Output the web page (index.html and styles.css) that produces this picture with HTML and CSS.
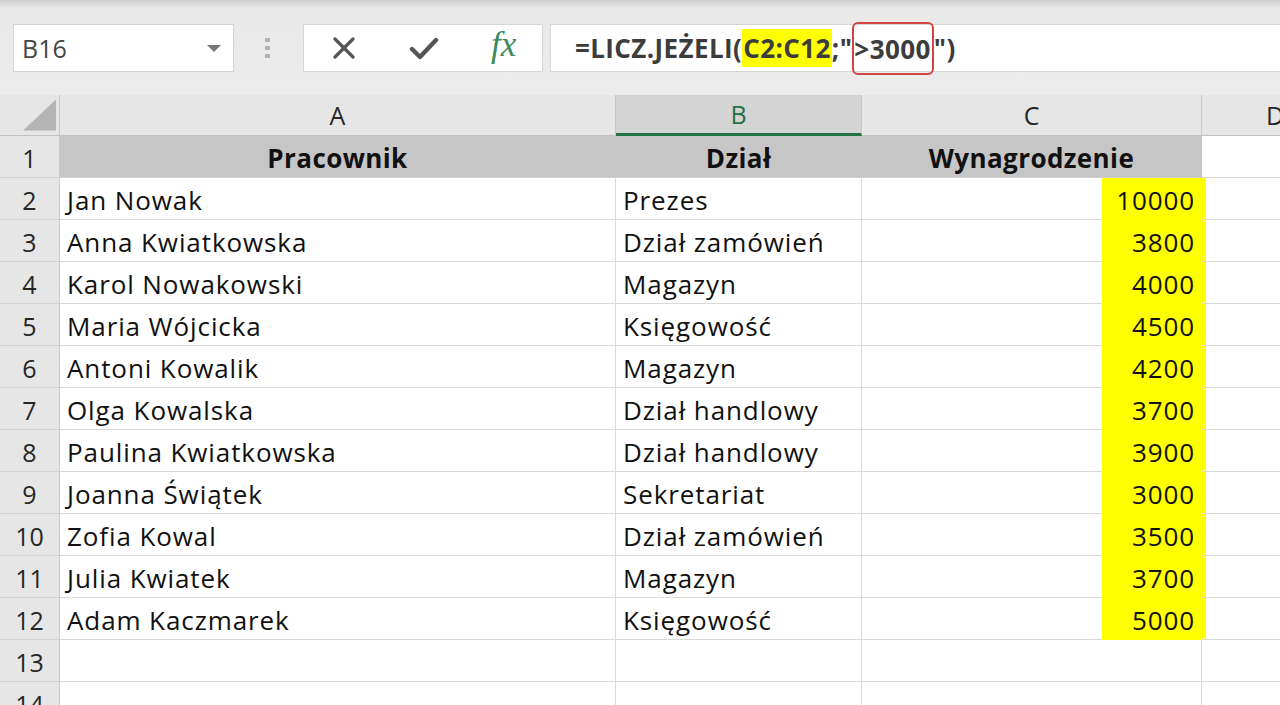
FILE: index.html
```html
<!DOCTYPE html>
<html lang="pl">
<head>
  <meta charset="UTF-8" />
  <title>LICZ.JEŻELI</title>
  <link rel="stylesheet" href="styles.css">
</head>
<body>

  <div class="toolbar">
    <div class="fbar">
      <div class="namebox">
        <span>B16</span>
        <span class="caret"></span>
      </div>
      <div class="grip"><i></i><i></i><i></i></div>
      <div class="fbtns">
        <svg class="ico-x" width="22" height="22" viewBox="0 0 22 22">
          <path d="M2 2 L20 20 M20 2 L2 20" stroke="#555" stroke-width="3.2" stroke-linecap="round" fill="none"/>
        </svg>
        <svg class="ico-ok" width="30" height="24" viewBox="0 0 30 24">
          <path d="M3 13 L11 21 L27 4" stroke="#555" stroke-width="4.4" stroke-linecap="round" stroke-linejoin="round" fill="none"/>
        </svg>
        <span class="fx">fx</span>
      </div>
      <div class="finput">=LICZ.JEŻELI(<span class="ref">C2:C12</span>;"<span class="crit">&gt;3000</span>")</div>
    </div>
  </div>

  <div class="sheet">
    <!-- column headers -->
    <div class="corner">
      <svg width="34" height="32" viewBox="0 0 34 32"><path d="M34 0 L34 32 L0 32 Z" fill="#b4b4b4"/></svg>
    </div>
    <div class="colhead">A</div>
    <div class="colhead sel">B</div>
    <div class="colhead">C</div>
    <div class="colhead last">D</div>

    <div class="rowhead">1</div>
    <div class="cell th">Pracownik</div>
    <div class="cell th">Dział</div>
    <div class="cell th">Wynagrodzenie</div>
    <div class="cell"></div>

    <div class="rowhead">2</div>
    <div class="cell">Jan Nowak</div>
    <div class="cell">Prezes</div>
    <div class="cell num"><span class="hl">10000</span></div>
    <div class="cell"></div>

    <div class="rowhead">3</div>
    <div class="cell">Anna Kwiatkowska</div>
    <div class="cell">Dział zamówień</div>
    <div class="cell num"><span class="hl">3800</span></div>
    <div class="cell"></div>

    <div class="rowhead">4</div>
    <div class="cell">Karol Nowakowski</div>
    <div class="cell">Magazyn</div>
    <div class="cell num"><span class="hl">4000</span></div>
    <div class="cell"></div>

    <div class="rowhead">5</div>
    <div class="cell">Maria Wójcicka</div>
    <div class="cell">Księgowość</div>
    <div class="cell num"><span class="hl">4500</span></div>
    <div class="cell"></div>

    <div class="rowhead">6</div>
    <div class="cell">Antoni Kowalik</div>
    <div class="cell">Magazyn</div>
    <div class="cell num"><span class="hl">4200</span></div>
    <div class="cell"></div>

    <div class="rowhead">7</div>
    <div class="cell">Olga Kowalska</div>
    <div class="cell">Dział handlowy</div>
    <div class="cell num"><span class="hl">3700</span></div>
    <div class="cell"></div>

    <div class="rowhead">8</div>
    <div class="cell">Paulina Kwiatkowska</div>
    <div class="cell">Dział handlowy</div>
    <div class="cell num"><span class="hl">3900</span></div>
    <div class="cell"></div>

    <div class="rowhead">9</div>
    <div class="cell">Joanna Świątek</div>
    <div class="cell">Sekretariat</div>
    <div class="cell num"><span class="hl">3000</span></div>
    <div class="cell"></div>

    <div class="rowhead">10</div>
    <div class="cell">Zofia Kowal</div>
    <div class="cell">Dział zamówień</div>
    <div class="cell num"><span class="hl">3500</span></div>
    <div class="cell"></div>

    <div class="rowhead">11</div>
    <div class="cell">Julia Kwiatek</div>
    <div class="cell">Magazyn</div>
    <div class="cell num"><span class="hl">3700</span></div>
    <div class="cell"></div>

    <div class="rowhead">12</div>
    <div class="cell">Adam Kaczmarek</div>
    <div class="cell">Księgowość</div>
    <div class="cell num"><span class="hl">5000</span></div>
    <div class="cell"></div>

    <div class="rowhead">13</div>
    <div class="cell"></div>
    <div class="cell"></div>
    <div class="cell"></div>
    <div class="cell"></div>

    <div class="rowhead">14</div>
    <div class="cell"></div>
    <div class="cell"></div>
    <div class="cell"></div>
    <div class="cell"></div>
  </div>

</body>
</html>
```

FILE: styles.css
```css
* { box-sizing: border-box; }
html, body {
  margin: 0;
  padding: 0;
  width: 1280px;
  height: 705px;
  overflow: hidden;
}
body {
  background: #fff;
  font-family: "Open Sans", Lato, sans-serif;
  color: #111;
}

/* ---- formula bar ---- */
.toolbar {
  height: 95px;
  background: linear-gradient(#cdcdcd 0, #dedede 5px, #e9e9e9 9px, #ececec 100%);
  padding-top: 24px;
}
.fbar {
  display: flex;
  height: 48px;
}
.namebox {
  margin-left: 13px;
  width: 221px;
  background: #fff;
  border: 1px solid #d2d2d2;
  display: flex;
  align-items: center;
  justify-content: space-between;
  padding: 0 12px 0 8px;
  font-size: 25px;
  color: #454545;
}
.caret {
  width: 0; height: 0;
  border-left: 7px solid transparent;
  border-right: 7px solid transparent;
  border-top: 7px solid #777;
}
.grip {
  margin: 0 32px 0 31px;
  width: 6px;
  display: flex;
  flex-direction: column;
  justify-content: center;
  gap: 4px;
}
.grip i {
  display: block;
  width: 5px; height: 4px;
  background: #b3b3b3;
}
.fbtns {
  width: 240px;
  background: #fff;
  border: 1px solid #d6d6d6;
  display: flex;
  align-items: center;
  padding-left: 29px;
}
.ico-ok { margin-left: 54px; }
.fx {
  margin-left: 52px;
  font-family: "Liberation Serif", "DejaVu Serif", serif;
  font-style: italic;
  font-size: 35px;
  color: #3a8a60;
  margin-top: -6px;
}
.finput {
  margin-left: 7px;
  flex: 1;
  background: #fff;
  border: 1px solid #d6d6d6;
  border-right: none;
  display: flex;
  align-items: center;
  padding-left: 24px;
  font-size: 26px;
  font-weight: 700;
  letter-spacing: 0.4px;
  color: #3c3c3c;
  white-space: pre;
}
.ref {
  background: #ffff00;
  padding: 1px 1px;
}
.crit {
  border: 2px solid #d24343;
  border-radius: 6px;
  padding: 7px 1px 6px 0;
}

/* ---- grid ---- */
.sheet {
  display: grid;
  grid-template-columns: 60px 556px 246px 340px 140px;
  grid-template-rows: 41px;
  grid-auto-rows: 42px;
  width: 1342px;
  font-size: 26px;
  letter-spacing: 0.9px;
}
.corner,
.colhead,
.rowhead {
  background: #e6e6e6;
  color: #262626;
  letter-spacing: 0;
  font-size: 25px;
}
.corner {
  border-right: 1px solid #c8c8c8;
  border-bottom: 1px solid #c2c2c2;
  display: flex;
  align-items: flex-end;
  padding: 0 3px 4px 23px;
}
.colhead {
  display: flex;
  align-items: center;
  justify-content: center;
  border-right: 1px solid #c8c8c8;
  border-bottom: 1px solid #c2c2c2;
}
.colhead.sel {
  background: #d4d4d4;
  color: #217346;
  border-bottom: 3px solid #217346;
}
.colhead.last { justify-content: flex-start; padding-left: 64px; }
.rowhead {
  display: flex;
  align-items: center;
  justify-content: center;
  border-right: 1px solid #c8c8c8;
  border-bottom: 1px solid #d2d2d2;
  padding-top: 2px;
}
.cell {
  display: flex;
  align-items: center;
  padding: 2px 7px 0;
  border-right: 1px solid #dadada;
  border-bottom: 1px solid #dadada;
  white-space: nowrap;
}
.cell.th {
  background: #c6c6c6;
  justify-content: center;
  font-weight: 700;
  letter-spacing: 0.4px;
  border-right-color: #c6c6c6;
  border-bottom-color: #cfcfcf;
}
.cell.num {
  justify-content: flex-end;
  padding: 0;
  align-items: stretch;
}
.hl {
  width: 104px;
  margin-right: -5px;
  margin-bottom: -1px;
  background: #ffff00;
  display: flex;
  align-items: center;
  justify-content: flex-end;
  padding: 2px 11px 0 0;
}
```
